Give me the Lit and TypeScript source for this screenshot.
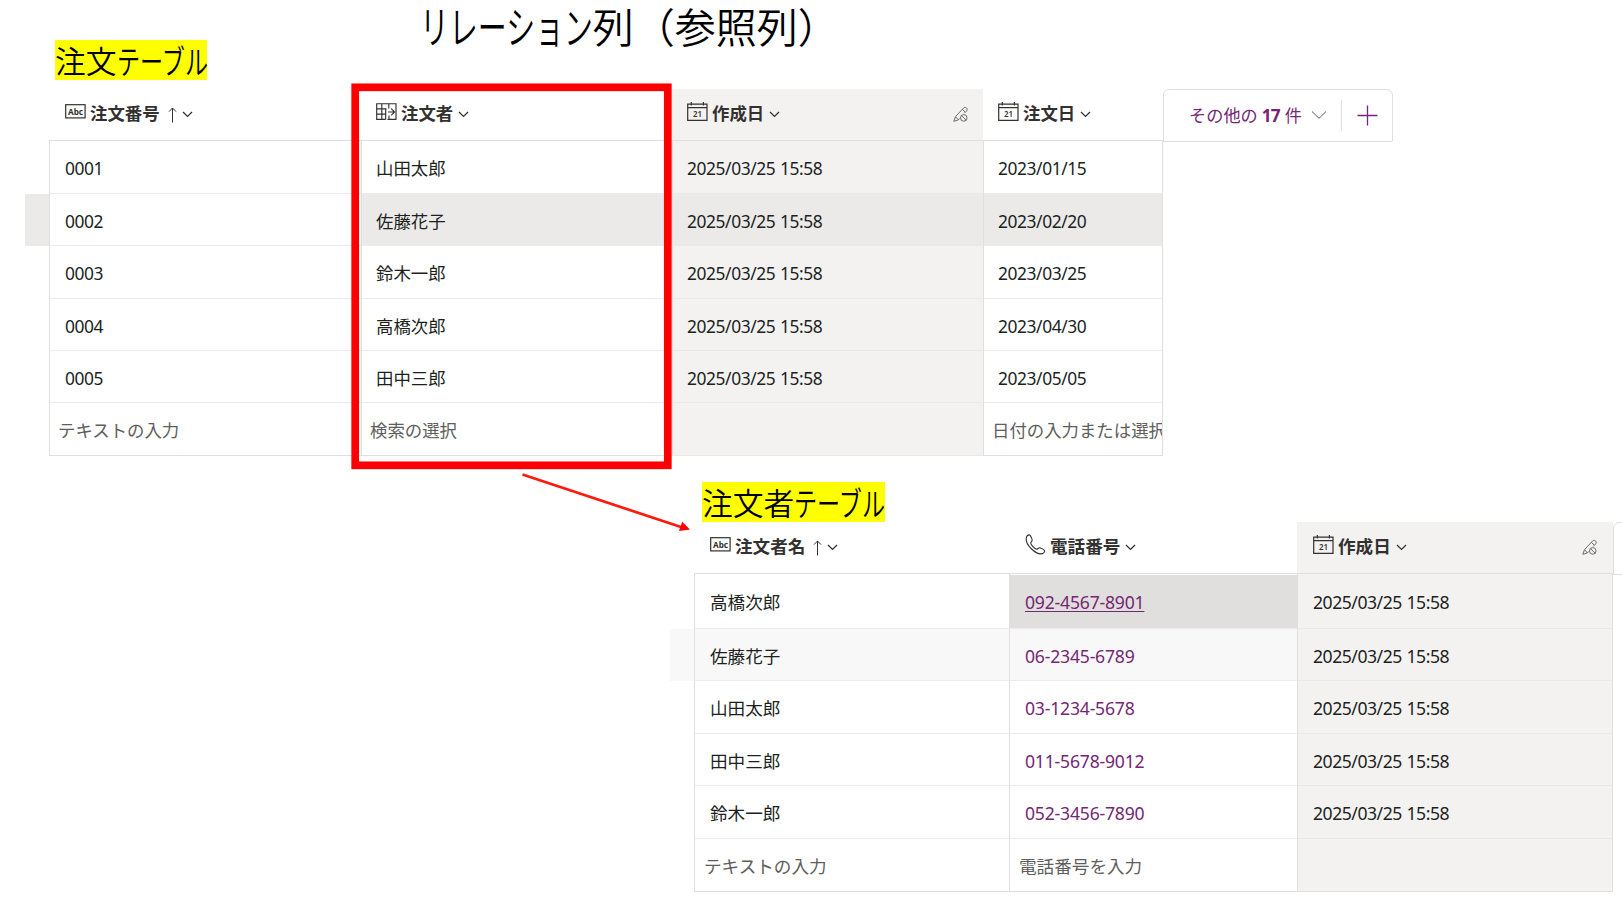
import { LitElement, html, svg, css, nothing, TemplateResult } from "lit";
import { customElement, property } from "lit/decorators.js";

type IconName = "abc" | "lookup" | "calendar" | "phone" | "chevron" | "up" | "lock" | "more" | "plus";

const ICONS: Record<IconName, { w: number; h: number; body: TemplateResult }> = {
  abc: {
    w: 21, h: 15,
    body: svg`<rect x="0.7" y="0.7" width="19.4" height="13.2" stroke-width="1.2"/>
      <text x="3" y="10.6" font-size="8.2" textLength="15" fill="currentColor" stroke="none">Abc</text>`,
  },
  lookup: {
    w: 21, h: 18,
    body: svg`<path d="M9.500 16.4H.7V.7H20V16.4H11.500M.7 5.9H10.500M.7 11.1H9.500M5.8 .7V16.4M12.8 .7V5.500M9.700 5.900V16.4M12 9H18M15.200 5.600L18.500 9L15.200 12.400M13 16.4V12.500" stroke-width="1.15"/>`,
  },
  calendar: {
    w: 21, h: 20,
    body: svg`<path d="M.7 2.2H20V18.4H.7ZM.7 5.6H20M4.3 0V3.6M16.4 0V3.6" stroke-width="1.2"/>
      <text x="6" y="15.3" font-size="8.4" font-weight="600" textLength="9" lengthAdjust="spacingAndGlyphs" fill="currentColor" stroke="none">21</text>`,
  },
  phone: {
    w: 21, h: 21,
    body: svg`<path d="M1.2 4.2C1.5 2.6 2.8 1 4 .9C5.400 .8 6.600 4 7.200 5.800C7.500 7 5.500 8 5.700 9.200C6.300 11.200 9.200 14.400 11.400 15.200C12.600 15.500 13.600 13.400 14.800 13.700C16.800 14.500 19.700 15.700 19.700 17C19.500 18.500 17.600 19.900 16 19.900C10.500 19.800 .6 11.500 1.200 4.200Z" stroke-width="1.1"/>`,
  },
  chevron: { w: 11, h: 7, body: svg`<path d="M1 1L5.500 5.400L10 1" stroke-width="1.300"/>` },
  up: { w: 9, h: 16, body: svg`<path d="M4.500 15.500V1M1 4.600L4.500 1L8 4.600" stroke-width="1"/>` },
  lock: {
    w: 16, h: 17,
    body: svg`<path d="M.8 15.300L2.500 10.600L10.700 1.900C12.400 .3 15.300 2.500 13.800 4.700L11.300 7.300M.8 15.300L5.400 13.900L6.800 12.400M2.500 10.600L5.400 13.900M9.400 3.400L12.200 6" stroke-width=".9"/>
      <circle cx="10.800" cy="11.900" r="3.300" stroke-width=".9"/><path d="M8.500 9.600L13.100 14.200" stroke-width=".9"/>`,
  },
  more: { w: 16, h: 10, body: svg`<path d="M1 1.500L8 8.300L15 1.500" stroke-width="1"/>` },
  plus: { w: 21, h: 21, body: svg`<path d="M10.500 .5V20.500M.5 10.500H20.500" stroke-width="1.300"/>` },
};

@customElement("ui-icon")
class UiIcon extends LitElement {
  @property() name: IconName = "abc";
  static styles = css`
    :host { display: inline-flex; flex: none; }
    svg { display: block; fill: none; stroke: currentColor; font-family: "Noto Sans", sans-serif; }
  `;
  render() {
    const i = ICONS[this.name];
    return html`<svg width=${i.w} height=${i.h} viewBox="0 0 ${i.w} ${i.h}">${i.body}</svg>`;
  }
}

interface Column { icon: IconName; label: string; sorted?: boolean; locked?: boolean; link?: boolean; hint?: string; }

@customElement("data-grid")
class DataGrid extends LitElement {
  @property() variant = "orders";
  @property({ attribute: false }) columns: Column[] = [];
  @property({ attribute: false }) rows: string[][] = [];

  static styles = css`
    :host { display: block; }
    .grid { display: grid; color: #201f1e; font-size: 17.4px; white-space: nowrap; }
    .orders { grid-template-columns: 24px 312px 311px 311px 180px; grid-template-rows: 52px 53px 52px 53px 52px 52px 53px; }
    .customers { grid-template-columns: 24px 315px 288px 316px; grid-template-rows: 52px 55px 52px 53px 52px 53px 53px; font-size: 17.6px; }
    .head { display: flex; align-items: center; border-bottom: 1px solid #e1dfdd; padding: 0 14px 3px 15px; font-weight: 700; color: #323130; }
    .head.sorted, .customers .head { padding-left: 16px; }
    .head .name { margin-left: 4px; line-height: 24px; margin-top: -1px; }
    .head .up { margin-left: 8px; margin-top: 4px; }
    .head .down { margin-left: 5px; margin-top: 2px; }
    .head .edit { margin-left: auto; margin-top: 3px; color: #605e5c; }
    .customers .head .edit { margin-right: 1px; }
    .abc { margin-top: -3px; }
    .lookup { margin-top: -2px; }
    .calendar, .phone { margin-top: -3px; }
    .cell { display: flex; align-items: center; box-sizing: border-box; overflow: hidden; padding: 1px 0 0 14px; border-left: 1px solid #e1dfdd; border-bottom: 1px solid #edebe9; }
    .customers .cell, .orders .cell.first { padding-left: 15px; }
    .cell.num { letter-spacing: -0.42px; word-spacing: 0.6px; padding-top: 2px; }
    .customers .cell.num { padding-top: 2px; letter-spacing: -0.48px; }
    .customers .cell.num.link { letter-spacing: -0.2px; }
    .cell.end { border-right: 1px solid #e1dfdd; }
    .cell.hint, .customers .cell.hint { padding-left: 8px; color: #605e5c; border-bottom-color: #e1dfdd; }
    .customers .cell.hint { padding-left: 9px; }
    .cell.link { color: #742774; }
    .locked { background: #f3f2f1; }
    .cell.locked { border-bottom-color: #ebe9e7; }
    .orders .cell.hot, .orders .gutter.hot { background: #ebeae8; }
    .customers .cell.hot:not(.locked), .customers .gutter.hot { background: #f8f8f8; }
    .cell.focus { background: #e1dfdd; text-decoration: underline; text-underline-offset: 2px; box-shadow: inset 0 1px #fff; }
  `;

  private head(c: Column) {
    return html`<div class="head ${c.locked ? "locked" : ""} ${c.sorted ? "sorted" : ""}">
      <ui-icon class=${c.icon} name=${c.icon}></ui-icon><span class="name">${c.label}</span>
      ${c.sorted ? html`<ui-icon class="up" name="up"></ui-icon>` : nothing}
      <ui-icon class="down" name="chevron"></ui-icon>
      ${c.locked ? html`<ui-icon class="edit" name="lock"></ui-icon>` : nothing}
    </div>`;
  }

  private cell(text: string, c: Column, r: number, i: number) {
    const orders = this.variant === "orders";
    const cls = ["cell"];
    if (/^\d/.test(text)) cls.push("num");
    if (i === 0) cls.push("first");
    if (c.locked) cls.push("locked");
    if (c.link) cls.push("link");
    if (r === 1 && !(orders && i === 0)) cls.push("hot");
    if (c.link && r === 0) cls.push("focus");
    if (i === this.columns.length - 1) cls.push("end");
    return html`<div class=${cls.join(" ")}>${text}</div>`;
  }

  render() {
    const last = this.columns.length - 1;
    return html`<div class="grid ${this.variant}">
      <div></div>${this.columns.map((c) => this.head(c))}
      ${this.rows.map((row, r) => html`<div class="gutter ${r === 1 ? "hot" : ""}"></div>${row.map((t, i) => this.cell(t, this.columns[i], r, i))}`)}
      <div></div>${this.columns.map((c, i) => html`<div class="cell hint ${c.locked ? "locked" : ""} ${i === last ? "end" : ""}">${c.hint ?? ""}</div>`)}
    </div>`;
  }
}

const STAMP = "2025/03/25 15:58";

@customElement("app-root")
class AppRoot extends LitElement {
  static styles = css`
    :host { display: block; font-family: "Noto Sans", "Noto Sans CJK JP", sans-serif; }
    .page { position: relative; width: 1622px; height: 899px; overflow: hidden; background: #fff; }
    h1, h2 { margin: 0; font-family: "Noto Sans CJK JP", sans-serif; font-weight: 350; color: #000; white-space: nowrap; }
    h1 { font-size: 41px; height: 40px; line-height: 51px; padding-left: 420px; }
    h2 { width: max-content; height: 40px; line-height: 40px; font-size: 30.8px; background: #ff0; }
    .kana { display: inline-block; transform: scale(0.75, 1.06); transform-origin: left; margin-right: -30.8px; }
    h1 .kana { transform: scale(0.705, 1.08); margin-right: -72.5px; }
    .t1 { margin-left: 55px; }
    .t2 { margin-left: 702px; margin-top: 26px; }
    .first { display: flex; margin: 9px 0 0 25px; align-items: flex-start; }
    .second { display: flex; margin-left: 670px; align-items: flex-start; }
    .more { box-sizing: border-box; display: flex; align-items: center; width: 230px; height: 53px; border: 1px solid #e1dfdd; border-radius: 6px 6px 2px 0; color: #742774; font-size: 17.2px; padding-left: 25px; padding-bottom: 1px; white-space: nowrap; }
    .more .label { padding-bottom: 2px; }
    .more b { letter-spacing: -0.8px; margin: 0 0.5px 0 -0.5px; }
    .more .chev { margin-left: 9px; color: #605e5c; }
    .more .bar { width: 1px; height: 31px; background: #e1dfdd; margin: 0 15px 0 14px; }
    .overlay { position: absolute; left: 0; top: 0; }
  `;

  render() {
    return html`<div class="page">
      <h1><span class="kana">リレーション</span>列（参照列）</h1>
      <h2 class="t1">注文<span class="kana">テーブル</span></h2>
      <div class="first">
        <data-grid .columns=${[
          { icon: "abc", label: "注文番号", sorted: true, hint: "テキストの入力" },
          { icon: "lookup", label: "注文者", hint: "検索の選択" },
          { icon: "calendar", label: "作成日", locked: true },
          { icon: "calendar", label: "注文日", hint: "日付の入力または選択" },
        ] as Column[]} .rows=${[
          ["0001", "山田太郎", STAMP, "2023/01/15"],
          ["0002", "佐藤花子", STAMP, "2023/02/20"],
          ["0003", "鈴木一郎", STAMP, "2023/03/25"],
          ["0004", "高橋次郎", STAMP, "2023/04/30"],
          ["0005", "田中三郎", STAMP, "2023/05/05"],
        ]}></data-grid>
        <div class="more"><span class="label">その他の <b>17</b> 件</span><ui-icon class="chev" name="more"></ui-icon><span class="bar"></span><ui-icon name="plus"></ui-icon></div>
      </div>
      <h2 class="t2">注文者<span class="kana">テーブル</span></h2>
      <div class="second">
        <data-grid variant="customers" .columns=${[
          { icon: "abc", label: "注文者名", sorted: true, hint: "テキストの入力" },
          { icon: "phone", label: "電話番号", link: true, hint: "電話番号を入力" },
          { icon: "calendar", label: "作成日", locked: true },
        ] as Column[]} .rows=${[
          ["高橋次郎", "092-4567-8901", STAMP],
          ["佐藤花子", "06-2345-6789", STAMP],
          ["山田太郎", "03-1234-5678", STAMP],
          ["田中三郎", "011-5678-9012", STAMP],
          ["鈴木一郎", "052-3456-7890", STAMP],
        ]}></data-grid>
        <div class="more"></div>
      </div>
      <svg class="overlay" width="1622" height="899" viewBox="0 0 1622 899">
        <rect x="355.200" y="87.300" width="312.600" height="378" fill="none" stroke="#f00" stroke-width="7.700"/>
        <path d="M522.500 474.500L681 527" stroke="#ff1a10" stroke-width="2.700"/>
        <path d="M690 529.500L682.200 521.800L679 531Z" fill="#f00"/>
      </svg>
    </div>`;
  }
}
